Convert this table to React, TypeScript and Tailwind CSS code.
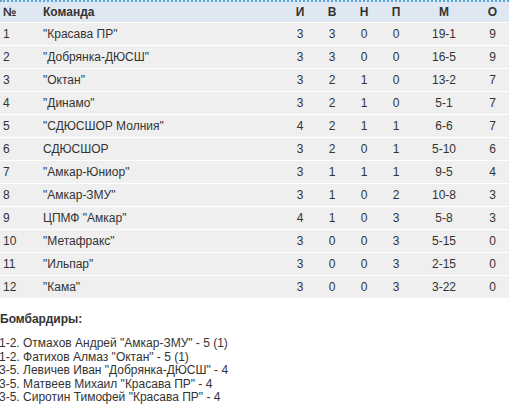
const rows: [number, string, number, number, number, number, string, number][] = [
  [1, '"Красава ПР"', 3, 3, 0, 0, "19-1", 9],
  [2, '"Добрянка-ДЮСШ"', 3, 3, 0, 0, "16-5", 9],
  [3, '"Октан"', 3, 2, 1, 0, "13-2", 7],
  [4, '"Динамо"', 3, 2, 1, 0, "5-1", 7],
  [5, '"СДЮСШОР Молния"', 4, 2, 1, 1, "6-6", 7],
  [6, "СДЮСШОР", 3, 2, 0, 1, "5-10", 6],
  [7, '"Амкар-Юниор"', 3, 1, 1, 1, "9-5", 4],
  [8, '"Амкар-ЗМУ"', 3, 1, 0, 2, "10-8", 3],
  [9, 'ЦПМФ "Амкар"', 4, 1, 0, 3, "5-8", 3],
  [10, '"Метафракс"', 3, 0, 0, 3, "5-15", 0],
  [11, '"Ильпар"', 3, 0, 0, 3, "2-15", 0],
  [12, '"Кама"', 3, 0, 0, 3, "3-22", 0],
];

const scorers = [
  '1-2. Отмахов Андрей "Амкар-ЗМУ" - 5 (1)',
  '1-2. Фатихов Алмаз "Октан" - 5 (1)',
  '3-5. Левичев Иван "Добрянка-ДЮСШ" - 4',
  '3-5. Матвеев Михаил "Красава ПР" - 4',
  '3-5. Сиротин Тимофей "Красава ПР" - 4',
];

const cols = "grid grid-cols-[40px_244px_32px_32px_32px_32px_64px_33px]";

export default function App() {
  return (
    <div
      className="w-[509px] h-[412px] overflow-hidden bg-white text-[12px] text-[#333]"
      style={{ fontFamily: '"Liberation Sans", Arial, sans-serif' }}
    >
      <div className={`${cols} h-[22px] items-center border-t-2 border-dotted border-[#58a6de] bg-[#dfe8f2] font-bold`}>
        <div className="pl-[3px]">№</div>
        <div className="pl-[3px]">Команда</div>
        <div className="text-center">И</div>
        <div className="text-center">В</div>
        <div className="text-center">Н</div>
        <div className="text-center">П</div>
        <div className="text-center">М</div>
        <div className="text-center">О</div>
      </div>
      {rows.map((r) => (
        <div
          key={r[0]}
          className={`${cols} h-[23px] items-center border-t border-white bg-[#efefef]`}
        >
          <div className="pl-[3px]">{r[0]}</div>
          <div className="pl-[3px]">{r[1]}</div>
          <div className="text-center">{r[2]}</div>
          <div className="text-center">{r[3]}</div>
          <div className="text-center">{r[4]}</div>
          <div className="text-center">{r[5]}</div>
          <div className="text-center">{r[6]}</div>
          <div className="text-center">{r[7]}</div>
        </div>
      ))}
      <div className="pt-[14px] font-bold leading-[14px]">Бомбардиры:</div>
      <div className="mt-[11px] -ml-px leading-[13.5px]">
        {scorers.map((s) => (
          <div key={s}>{s}</div>
        ))}
      </div>
    </div>
  );
}
